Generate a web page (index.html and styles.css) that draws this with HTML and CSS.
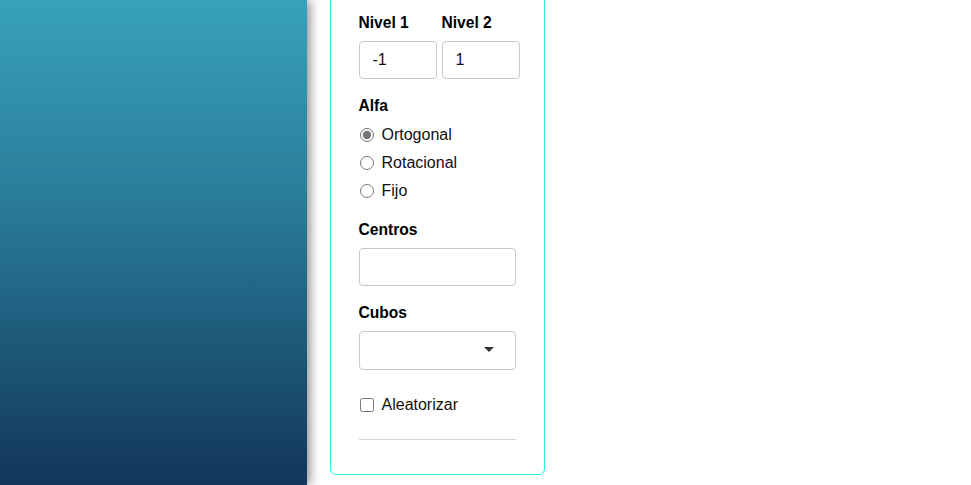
FILE: index.html
```html
<!DOCTYPE html>
<html lang="es">
<head>
<meta charset="utf-8">
<title>Panel</title>
<link rel="stylesheet" href="styles.css">
</head>
<body>
<div class="layout">
  <aside class="sidebar"></aside>
  <main class="main">
    <section class="card">
      <div class="pair">
        <div class="field">
          <label class="label" for="n1">Nivel 1</label>
          <input class="input small" id="n1" type="text" value="-1">
        </div>
        <div class="field">
          <label class="label" for="n2">Nivel 2</label>
          <input class="input small" id="n2" type="text" value="1">
        </div>
      </div>

      <div class="group alfa">
        <div class="label">Alfa</div>
        <label class="opt"><input type="radio" name="alfa" checked><span>Ortogonal</span></label>
        <label class="opt"><input type="radio" name="alfa"><span>Rotacional</span></label>
        <label class="opt"><input type="radio" name="alfa"><span>Fijo</span></label>
      </div>

      <div class="group centros">
        <label class="label" for="centros">Centros</label>
        <input class="input wide" id="centros" type="text">
      </div>

      <div class="group cubos">
        <label class="label" for="cubos">Cubos</label>
        <div class="select-wrap">
          <select class="input wide select" id="cubos"><option></option></select>
          <span class="caret"></span>
        </div>
      </div>

      <label class="opt check"><input type="checkbox"><span>Aleatorizar</span></label>

      <hr class="divider">
    </section>
  </main>
</div>
</body>
</html>
```

FILE: styles.css
```css
* { box-sizing: border-box; }
html, body { margin: 0; padding: 0; background: #fff; }
body {
  font-family: "Liberation Sans", Arial, sans-serif;
  color: #111;
  overflow: hidden;
}
.layout {
  display: flex;
  height: 485px;
}
.sidebar {
  width: 307px;
  flex: 0 0 307px;
  background: linear-gradient(to bottom, #38a1ba 0%, #2a7e9a 40%, #12365a 100%);
  box-shadow: 3px 0 10px rgba(0, 0, 0, 0.45);
  position: relative;
  z-index: 1;
}
.main {
  flex: 1;
  padding-left: 23px;
}
.card {
  width: 215px;
  margin-top: -20px;
  border: 1.5px solid #2cf0dc;
  border-radius: 6px;
  padding: 31.5px 27px 34px 27.5px;
}
.pair {
  display: flex;
  gap: 5px;
}
.field {
  display: flex;
  flex-direction: column;
}
.label {
  display: block;
  font-weight: bold;
  font-size: 15.6px;
  line-height: 18px;
  padding-top: 1px;
  color: #000;
}
.field .label, .group .label { margin-bottom: 9px; }
.input {
  display: block;
  height: 38px;
  border: 1px solid #c8c8c8;
  border-radius: 4px;
  font-family: "Liberation Sans", Arial, sans-serif;
  font-size: 16px;
  color: #111;
  padding: 0 13px;
  background: #fff;
  outline: none;
}
.small { width: 78px; }
.wide { width: 157px; }
.group.alfa { margin-top: 17px; }
.group.alfa .label { margin-bottom: 6px; }
.opt {
  display: flex;
  align-items: center;
  height: 28px;
  font-size: 16px;
  color: #111;
}
.opt input {
  margin: 1px 8px 0 1px;
  width: 14px;
  height: 14px;
  accent-color: #767676;
}
.group.centros { margin-top: 15px; }
.group.cubos { margin-top: 17px; }
.select-wrap {
  position: relative;
  width: 157px;
}
.select {
  appearance: none;
  -webkit-appearance: none;
  height: 39px;
}
.caret {
  position: absolute;
  right: 22px;
  top: 16px;
  width: 0;
  height: 0;
  border-left: 5px solid transparent;
  border-right: 5px solid transparent;
  border-top: 5px solid #333;
}
.check { margin-top: 21px; }
.divider {
  margin: 20px 0 0 0;
  width: 157px;
  border: 0;
  border-top: 1px solid #d6d6d6;
}
```
